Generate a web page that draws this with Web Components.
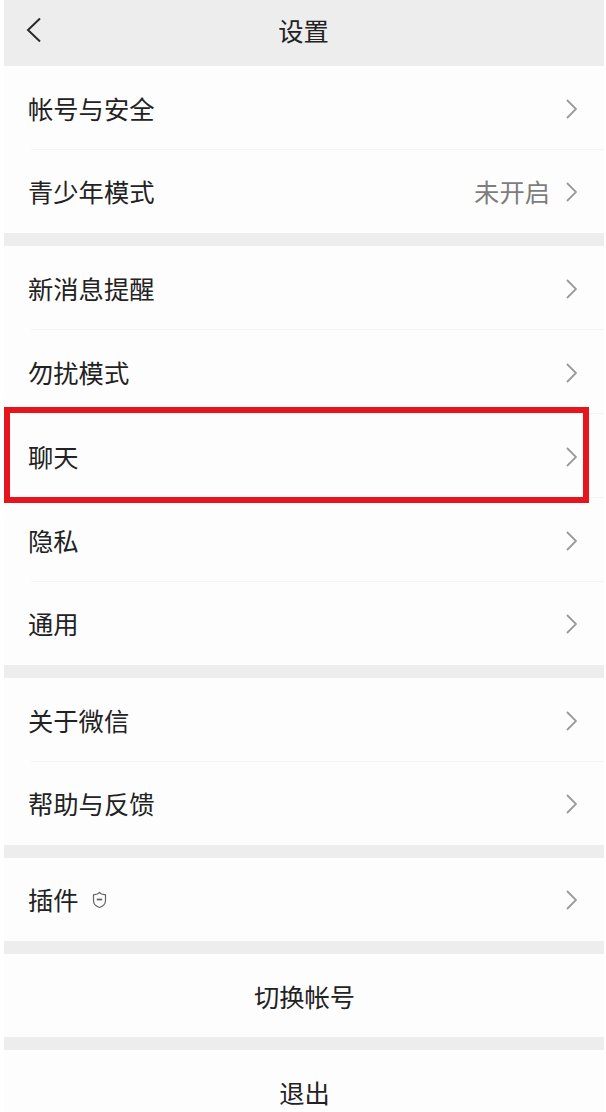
<!DOCTYPE html>
<html lang="zh">
<head>
<meta charset="utf-8">
<title>设置</title>
<style>
  html, body { margin: 0; background: #fff; }
  body { height: 1112px; overflow: hidden; font-family: "Noto Sans CJK SC", "Noto Sans", sans-serif; }
</style>
</head>
<body>
<settings-page>
  <nav-bar>设置</nav-bar>
  <row-group>
    <setting-row>帐号与安全</setting-row>
    <setting-row last value="未开启">青少年模式</setting-row>
  </row-group>
  <row-group>
    <setting-row>新消息提醒</setting-row>
    <setting-row>勿扰模式</setting-row>
    <setting-row marked>聊天</setting-row>
    <setting-row>隐私</setting-row>
    <setting-row last>通用</setting-row>
  </row-group>
  <row-group>
    <setting-row>关于微信</setting-row>
    <setting-row last>帮助与反馈</setting-row>
  </row-group>
  <row-group>
    <setting-row last>插件<shield-icon slot="extra"></shield-icon></setting-row>
  </row-group>
  <row-group>
    <action-row>切换帐号</action-row>
  </row-group>
  <row-group>
    <action-row tall>退出</action-row>
  </row-group>
</settings-page>

<script>
class SettingsPage extends HTMLElement {
  constructor() {
    super();
    this.attachShadow({ mode: "open" }).innerHTML = `
      <style>
        :host { display: flex; flex-direction: column; gap: 13px; margin: 0 2px 0 4px; background: #ededee; color: #222; font-size: 25.3px; height: 1112px; overflow: hidden; }
      </style>
      <slot></slot>`;
  }
}

class NavBar extends HTMLElement {
  constructor() {
    super();
    this.attachShadow({ mode: "open" }).innerHTML = `
      <style>
        :host { display: flex; align-items: center; justify-content: center; height: 66px; margin-bottom: -13px; background: #ededed; position: relative; flex: none; }
        svg { position: absolute; left: 21px; top: 17px; }
        span { margin-top: -7px; margin-left: -1px; }
      </style>
      <svg width="18" height="26" viewBox="0 0 18 26" fill="none" stroke="#2a2a2a" stroke-width="2"><path d="M15 1.500 3 13 15 24.500"/></svg>
      <span><slot></slot></span>`;
  }
}

class RowGroup extends HTMLElement {
  constructor() {
    super();
    this.attachShadow({ mode: "open" }).innerHTML = `
      <style>
        :host { display: block; background: #fdfdfe; flex: none; }
      </style>
      <slot></slot>`;
  }
}

class SettingRow extends HTMLElement {
  constructor() {
    super();
    const value = this.getAttribute("value");
    this.attachShadow({ mode: "open" }).innerHTML = `
      <style>
        :host { display: flex; align-items: center; height: 83px; padding: 0 27px 0 24px; position: relative; }
        :host(:not([last])) { height: 84px; background: linear-gradient(#f3f3f4, #f3f3f4) no-repeat 27px 100% / 100% 1px; }
        .label { display: flex; align-items: center; flex: 1; margin-top: -1px; }
        .value { color: #7d7d7d; margin: -1px 16px 0 0; }
        svg { flex: none; margin-top: 1px; }
        .mark { position: absolute; left: 0; right: 15px; top: -7px; bottom: -5px; border: 6px solid #e8141c; box-sizing: border-box; }
        ::slotted([slot=extra]) { margin-left: 13px; }
      </style>
      <span class="label"><slot></slot><slot name="extra"></slot></span>
      ${value ? `<span class="value">${value}</span>` : ""}
      <svg width="11" height="20" viewBox="0 0 11 20" fill="none" stroke="#9a9a9a" stroke-width="1.800"><path d="M1 1 10 10 1 19"/></svg>
      ${this.hasAttribute("marked") ? `<div class="mark"></div>` : ""}`;
  }
}

class ActionRow extends HTMLElement {
  constructor() {
    super();
    this.attachShadow({ mode: "open" }).innerHTML = `
      <style>
        :host { display: flex; align-items: center; justify-content: center; height: 83px; }
        :host([tall]) { height: 62px; align-items: flex-start; }
        span { margin-top: 0; margin-left: 1px; }
        :host([tall]) span { margin-top: 24px; }
      </style>
      <span><slot></slot></span>`;
  }
}

class ShieldIcon extends HTMLElement {
  constructor() {
    super();
    this.attachShadow({ mode: "open" }).innerHTML = `
      <style>
        :host { display: inline-flex; margin-top: 1px; }
      </style>
      <svg width="15" height="18" viewBox="0 0 15 18" fill="none" stroke="#666" stroke-width="1.200"><path d="M7.500 1.500 9.500 3 13.500 3.800V9.500C13.500 13 10.500 15.500 7.500 16.500 4.500 15.500 1.500 13 1.500 9.500V3.800L5.500 3Z"/><path d="M4.800 8.500H10.200" stroke-width="1.800"/></svg>`;
  }
}

customElements.define("settings-page", SettingsPage);
customElements.define("nav-bar", NavBar);
customElements.define("row-group", RowGroup);
customElements.define("setting-row", SettingRow);
customElements.define("action-row", ActionRow);
customElements.define("shield-icon", ShieldIcon);
</script>
</body>
</html>
